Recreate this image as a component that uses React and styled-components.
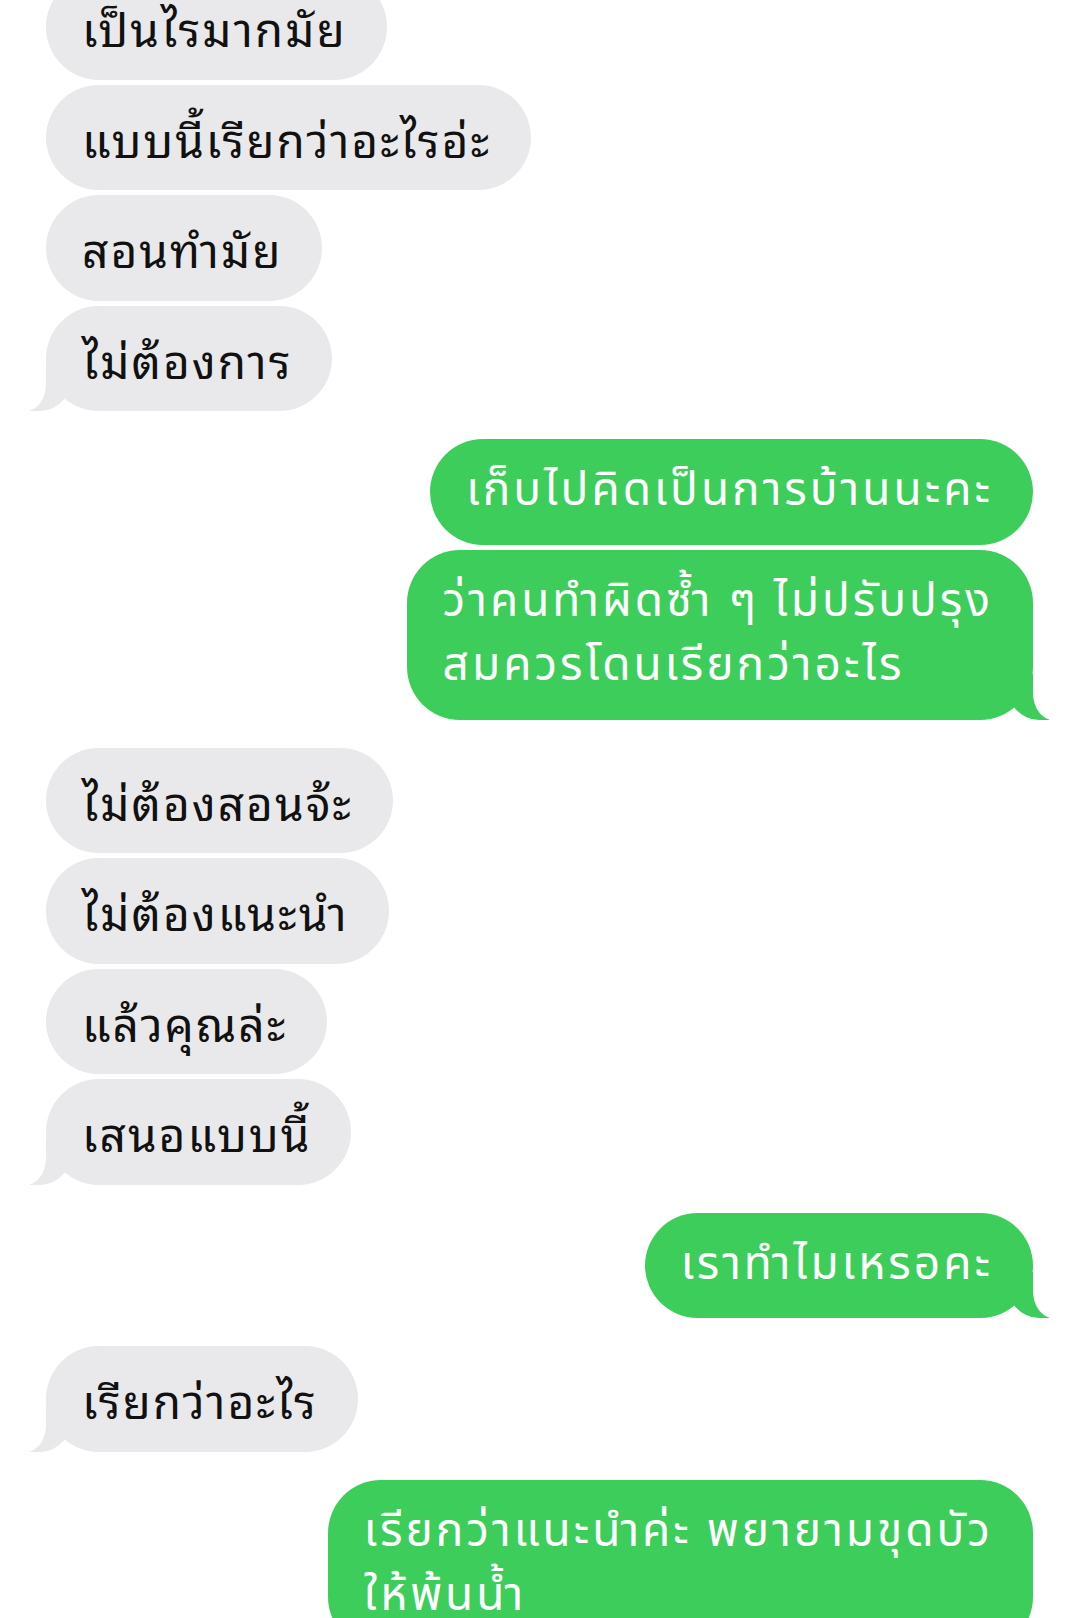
import React from 'react';
import styled, { createGlobalStyle, css } from 'styled-components';

const GlobalStyle = createGlobalStyle`
  html, body {
    margin: 0;
    padding: 0;
    background: #ffffff;
  }
  body {
    width: 1080px;
    height: 1618px;
    overflow: hidden;
    font-family: "Noto Sans Thai Looped", "Noto Sans Thai", "Noto Sans", "DejaVu Sans", sans-serif;
  }
`;

const Thread = styled.div`
  display: flex;
  flex-direction: column;
  padding: 0 47px 0 46px;
  margin-top: -26px;
`;

const Group = styled.div`
  display: flex;
  flex-direction: column;
  align-items: ${({ $mine }) => ($mine ? 'flex-end' : 'flex-start')};
  gap: 5px;
  & + & {
    margin-top: 28px;
  }
`;

const Bubble = styled.div`
  position: relative;
  box-sizing: border-box;
  min-height: 105.5px;
  padding: 20px 40px 21px 36px;
  border-radius: 53px;
  font-size: 46px;
  line-height: 64.5px;
  white-space: nowrap;
  ${({ $mine }) =>
    $mine
      ? css`
          background: #3dcd5a;
          color: #ffffff;
          letter-spacing: 3px;
          font-family: "Noto Sans Thai", "Noto Sans", sans-serif;
        `
      : css`
          background: #e9e9eb;
          color: #111111;
          letter-spacing: 2px;
          font-family: "Noto Sans Thai Looped", "Noto Sans Thai", "Noto Sans", sans-serif;
        `}

  ${({ $tail, $mine }) =>
    $tail &&
    css`
      &::before {
        content: '';
        position: absolute;
        bottom: 0;
        width: 44px;
        height: 46px;
        background: ${$mine ? '#3dcd5a' : '#e9e9eb'};
        ${$mine
          ? css`
              right: -16px;
              border-bottom-left-radius: 34px 40px;
            `
          : css`
              left: -16px;
              border-bottom-right-radius: 34px 40px;
            `}
      }
      &::after {
        content: '';
        position: absolute;
        bottom: 0;
        width: 20px;
        height: 48px;
        background: #ffffff;
        ${$mine
          ? css`
              right: -20px;
              border-bottom-left-radius: 22px 30px;
            `
          : css`
              left: -20px;
              border-bottom-right-radius: 22px 30px;
            `}
      }
    `}
`;

const Text = styled.span`
  position: relative;
  z-index: 1;
`;

const conversation = [
  { mine: false, lines: [['เป็นไรมากมัย'], ['แบบนี้เรียกว่าอะไรอ่ะ'], ['สอนทำมัย'], ['ไม่ต้องการ']] },
  { mine: true, lines: [['เก็บไปคิดเป็นการบ้านนะคะ'], ['ว่าคนทำผิดซ้ำ ๆ ไม่ปรับปรุง', 'สมควรโดนเรียกว่าอะไร']] },
  { mine: false, lines: [['ไม่ต้องสอนจ้ะ'], ['ไม่ต้องแนะนำ'], ['แล้วคุณล่ะ'], ['เสนอแบบนี้']] },
  { mine: true, lines: [['เราทำไมเหรอคะ']] },
  { mine: false, lines: [['เรียกว่าอะไร']] },
  { mine: true, lines: [['เรียกว่าแนะนำค่ะ พยายามขุดบัว', 'ให้พ้นน้ำ']], open: true },
];

export default function App() {
  return (
    <>
      <GlobalStyle />
      <Thread>
        {conversation.map((group, gi) => (
          <Group key={gi} $mine={group.mine}>
            {group.lines.map((msg, mi) => (
              <Bubble
                key={mi}
                $mine={group.mine}
                $tail={mi === group.lines.length - 1 && !group.open}
              >
                <Text>
                  {msg.map((line, li) => (
                    <React.Fragment key={li}>
                      {li > 0 && <br />}
                      {line}
                    </React.Fragment>
                  ))}
                </Text>
              </Bubble>
            ))}
          </Group>
        ))}
      </Thread>
    </>
  );
}
